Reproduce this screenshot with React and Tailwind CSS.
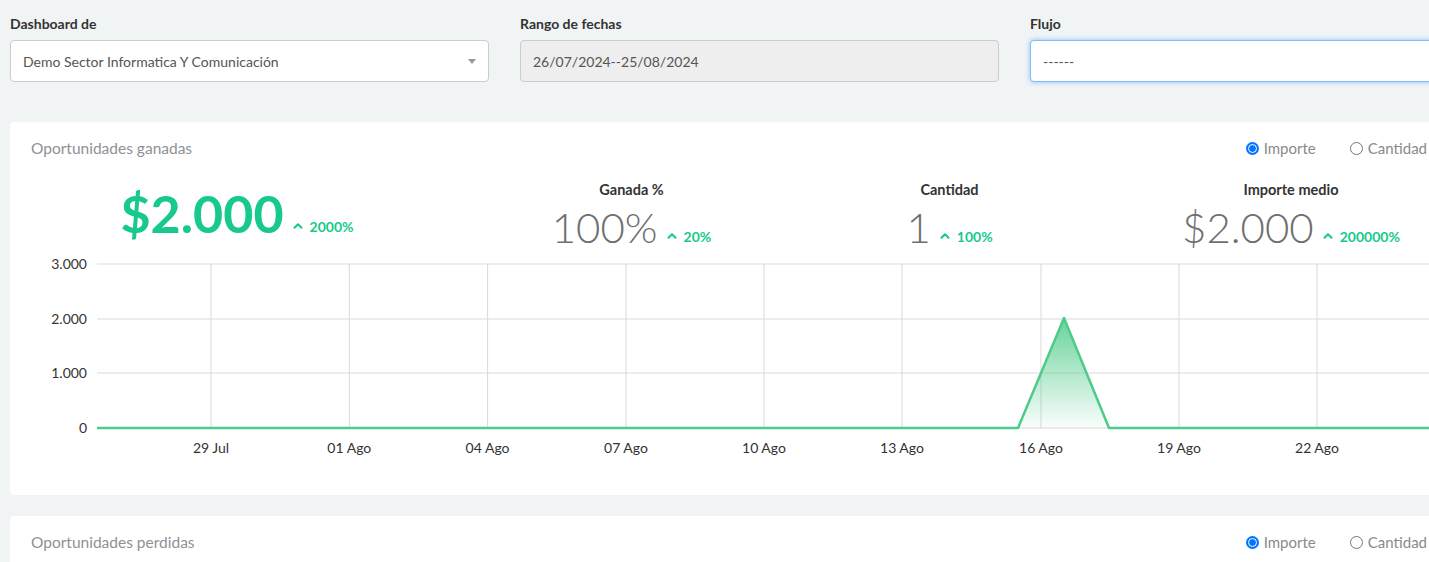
import { ChevronUp } from "lucide-react";

const font = { fontFamily: "Lato, 'Noto Sans', sans-serif" };

function Radio({ checked, label }) {
  return (
    <label className="flex items-center gap-[5px] text-[15px] text-[#8a8a8a]">
      {checked ? (
        <span className="w-[13px] h-[13px] rounded-full bg-[#0075ff] flex items-center justify-center">
          <span className="w-[9px] h-[9px] rounded-full border-[1.5px] border-white bg-[#0075ff]" />
        </span>
      ) : (
        <span className="w-[13px] h-[13px] rounded-full border border-[#767676] bg-white" />
      )}
      <span>{label}</span>
    </label>
  );
}

function CardHeader({ title }) {
  return (
    <div className="flex items-center justify-between pl-[21px] pr-[82px] pt-[16px] h-[36px]">
      <span className="text-[15.5px] leading-5 text-[#8d9196]">{title}</span>
      <div className="flex items-center gap-[34px]">
        <Radio checked label="Importe" />
        <Radio label="Cantidad" />
      </div>
    </div>
  );
}

function Delta({ value }) {
  return (
    <span className="flex items-center gap-[5px] text-[14px] font-bold text-[#17c98a] ml-[7px]">
      <ChevronUp size={14} strokeWidth={3.5} />
      {value}
    </span>
  );
}

function Stat({ label, value, delta, width }) {
  return (
    <div className={`flex flex-col items-center ${width}`}>
      <div className="text-[14.5px] leading-5 font-bold text-[#333]">{label}</div>
      <div className="flex items-baseline mt-[3px]">
        <span className="text-[42px] leading-[48px] font-light text-[#6f6f6f]">{value}</span>
        <Delta value={delta} />
      </div>
    </div>
  );
}

const xs = [201, 339.3, 477.6, 616, 754, 892, 1031, 1169, 1307, 1446];
const xl = ["29 Jul", "01 Ago", "04 Ago", "07 Ago", "10 Ago", "13 Ago", "16 Ago", "19 Ago", "22 Ago"];
const ys = [[8, "3.000"], [63, "2.000"], [117, "1.000"], [172, "0"]];

function Chart() {
  return (
    <svg width="1498" height="215" className="block" style={font}>
      <defs>
        <linearGradient id="g" x1="0" y1="0" x2="0" y2="1">
          <stop offset="0" stopColor="#4ecb8a" stopOpacity="0.85" />
          <stop offset="1" stopColor="#4ecb8a" stopOpacity="0.03" />
        </linearGradient>
      </defs>
      {ys.map(([y, t]) => (
        <g key={t}>
          <line x1="87" x2="1498" y1={y} y2={y} stroke="#d9d9d9" />
          <text x="77" y={y + 5} textAnchor="end" fontSize="14" fill="#333">{t}</text>
        </g>
      ))}
      {xs.map((x, i) => (
        <g key={i}>
          <line x1={x} x2={x} y1="8" y2="172" stroke="#d9d9d9" />
          {xl[i] && (
            <text x={x} y="197" textAnchor="middle" fontSize="14" fill="#333">{xl[i]}</text>
          )}
        </g>
      ))}
      <polygon points="1008,172 1054,62 1099,172" fill="url(#g)" />
      <polyline points="87,172 1008,172 1054,62 1099,172 1498,172" fill="none" stroke="#4ecb8a" strokeWidth="2.5" strokeLinejoin="round" />
    </svg>
  );
}

export default function App() {
  return (
    <div className="w-full h-[562px] overflow-hidden bg-[#f1f4f5]" style={font}>
      <div className="w-[1519px]">
        <div className="flex gap-[31px] pl-[10px] pt-[14px]">
          <div className="w-[479px]">
            <div className="text-[14px] leading-5 font-bold text-[#333]">Dashboard de</div>
            <div className="mt-[6px] h-[42px] bg-white border border-[#ccc] rounded-[4px] flex items-center justify-between pl-[12px] pr-[12px]">
              <span className="text-[14px] text-[#555]">Demo Sector Informatica Y Comunicación</span>
              <span className="w-0 h-0 border-l-[4px] border-r-[4px] border-t-[5px] border-l-transparent border-r-transparent border-t-[#999]" />
            </div>
          </div>
          <div className="w-[479px]">
            <div className="text-[14px] leading-5 font-bold text-[#333]">Rango de fechas</div>
            <div className="mt-[6px] h-[42px] bg-[#eeeeee] border border-[#ccc] rounded-[4px] flex items-center pl-[12px]">
              <span className="text-[14px] text-[#555]">26/07/2024--25/08/2024</span>
            </div>
          </div>
          <div className="w-[479px]">
            <div className="text-[14px] leading-5 font-bold text-[#333]">Flujo</div>
            <div className="mt-[6px] h-[42px] bg-white border border-[#80bdff] rounded-[4px] flex items-center pl-[12px] shadow-[0_0_5px_rgba(0,123,255,0.45)]">
              <span className="text-[14px] text-[#555]">------</span>
            </div>
          </div>
        </div>

        <div className="mx-[10px] mt-[40px] h-[373px] bg-white rounded-[4px]">
          <CardHeader title="Oportunidades ganadas" />
          <div className="flex items-start mt-[22px] h-[76px]">
            <div className="w-[430px] flex justify-center pl-[24px] items-baseline mt-[3px]">
              <span className="text-[52px] leading-[60px] font-bold text-[#17c98a]">$2.000</span>
              <Delta value="2000%" />
            </div>
            <Stat label="Ganada %" value="100%" delta="20%" width="w-[383px]" />
            <Stat label="Cantidad" value="1" delta="100%" width="w-[253px]" />
            <Stat label="Importe medio" value="$2.000" delta="200000%" width="w-[430px]" />
          </div>
          <Chart />
        </div>

        <div className="mx-[10px] mt-[21px] h-[120px] bg-white rounded-[4px]">
          <CardHeader title="Oportunidades perdidas" />
        </div>
      </div>
    </div>
  );
}
